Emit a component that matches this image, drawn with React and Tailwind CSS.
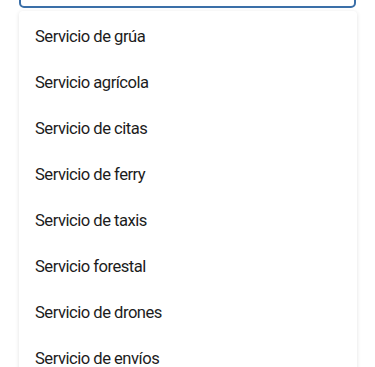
export default function App() {
  const items = [
    "Servicio de grúa",
    "Servicio agrícola",
    "Servicio de citas",
    "Servicio de ferry",
    "Servicio de taxis",
    "Servicio forestal",
    "Servicio de drones",
    "Servicio de envíos",
  ];
  return (
    <div className="w-[375px] h-[367px] overflow-hidden bg-white px-[19px]" style={{ fontFamily: "Roboto, sans-serif" }}>
      <div className="h-[40px] mt-[-32px] border-2 border-[#3b6fa8] rounded-[5px] bg-white" />
      <div className="mt-[3px] mr-[-1px] bg-white shadow-[0_1px_4px_rgba(0,0,0,0.12)] rounded-[4px] pt-[3px]">
        {items.map((t) => (
          <div key={t} className="h-[46px] flex items-center pl-[16px] pt-[1px] text-[16.6px] tracking-[-0.5px] text-[#1c1c1c]">
            {t}
          </div>
        ))}
      </div>
    </div>
  );
}
